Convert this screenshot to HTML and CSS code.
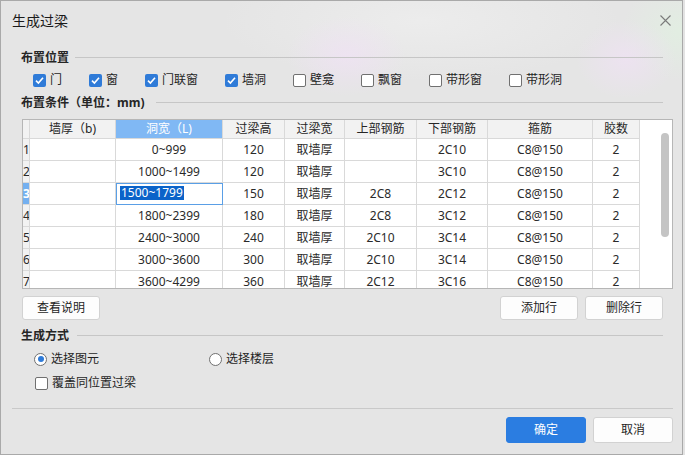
FILE: index.html
```html
<!DOCTYPE html>
<html lang="zh-CN">
<head>
<meta charset="utf-8">
<title>生成过梁</title>
<link rel="stylesheet" href="styles.css">
</head>
<body>
<div class="window">
  <div class="titlebar">
    <span class="title">生成过梁</span>
    <svg class="close" width="11" height="11" viewBox="0 0 11 11"><path d="M0.5 0.5 L10.5 10.5 M10.5 0.5 L0.5 10.5" stroke="#7a7a7a" stroke-width="1.1" fill="none"/></svg>
  </div>
  <div class="content">
    <div class="section-head"><span class="section-label">布置位置</span><i class="rule"></i></div>
    <div class="checks">
      <label class="opt"><span class="cb on"><svg width="13" height="13" viewBox="0 0 13 13"><path d="M3 6.6 L5.4 9 L10 3.8" stroke="#fff" stroke-width="1.6" fill="none"/></svg></span>门</label>
      <label class="opt"><span class="cb on"><svg width="13" height="13" viewBox="0 0 13 13"><path d="M3 6.6 L5.4 9 L10 3.8" stroke="#fff" stroke-width="1.6" fill="none"/></svg></span>窗</label>
      <label class="opt"><span class="cb on"><svg width="13" height="13" viewBox="0 0 13 13"><path d="M3 6.6 L5.4 9 L10 3.8" stroke="#fff" stroke-width="1.6" fill="none"/></svg></span>门联窗</label>
      <label class="opt"><span class="cb on"><svg width="13" height="13" viewBox="0 0 13 13"><path d="M3 6.6 L5.4 9 L10 3.8" stroke="#fff" stroke-width="1.6" fill="none"/></svg></span>墙洞</label>
      <label class="opt"><span class="cb"></span>壁龛</label>
      <label class="opt"><span class="cb"></span>飘窗</label>
      <label class="opt"><span class="cb"></span>带形窗</label>
      <label class="opt"><span class="cb"></span>带形洞</label>
    </div>
    <div class="section-head sh2"><span class="section-label">布置条件（单位：mm)</span><i class="rule"></i></div>
    <div class="grid-wrap">
      <div class="grid">
        <div class="c hd rh"></div><div class="c hd">墙厚（b)</div><div class="c hd sel-col">洞宽（L)</div><div class="c hd">过梁高</div><div class="c hd">过梁宽</div><div class="c hd">上部钢筋</div><div class="c hd">下部钢筋</div><div class="c hd">箍筋</div><div class="c hd">胶数</div>

        <div class="c rh">1</div><div class="c"></div><div class="c">0~999</div><div class="c">120</div><div class="c">取墙厚</div><div class="c"></div><div class="c">2C10</div><div class="c">C8@150</div><div class="c">2</div>
        <div class="c rh">2</div><div class="c"></div><div class="c">1000~1499</div><div class="c">120</div><div class="c">取墙厚</div><div class="c"></div><div class="c">3C10</div><div class="c">C8@150</div><div class="c">2</div>
        <div class="c rh rh-sel">3</div><div class="c"></div><div class="c editor"><span class="sel-text">1500~1799</span></div><div class="c">150</div><div class="c">取墙厚</div><div class="c">2C8</div><div class="c">2C12</div><div class="c">C8@150</div><div class="c">2</div>
        <div class="c rh">4</div><div class="c"></div><div class="c">1800~2399</div><div class="c">180</div><div class="c">取墙厚</div><div class="c">2C8</div><div class="c">3C12</div><div class="c">C8@150</div><div class="c">2</div>
        <div class="c rh">5</div><div class="c"></div><div class="c">2400~3000</div><div class="c">240</div><div class="c">取墙厚</div><div class="c">2C10</div><div class="c">3C14</div><div class="c">C8@150</div><div class="c">2</div>
        <div class="c rh">6</div><div class="c"></div><div class="c">3000~3600</div><div class="c">300</div><div class="c">取墙厚</div><div class="c">2C10</div><div class="c">3C14</div><div class="c">C8@150</div><div class="c">2</div>
        <div class="c rh">7</div><div class="c"></div><div class="c">3600~4299</div><div class="c">360</div><div class="c">取墙厚</div><div class="c">2C12</div><div class="c">3C16</div><div class="c">C8@150</div><div class="c">2</div>
      </div>
      <div class="vscroll"><div class="thumb"></div></div>
    </div>
    <div class="btn-row">
      <button class="btn">查看说明</button>
      <div class="spacer"></div>
      <button class="btn">添加行</button>
      <button class="btn">删除行</button>
    </div>
    <div class="section-head sh3"><span class="section-label">生成方式</span><i class="rule"></i></div>
    <div class="radios">
      <label class="opt"><span class="rd on"><i></i></span>选择图元</label>
      <label class="opt"><span class="rd"></span>选择楼层</label>
    </div>
    <div class="check-line">
      <label class="opt"><span class="cb"></span>覆盖同位置过梁</label>
    </div>
  </div>
  <div class="footer">
    <button class="fbtn primary">确定</button>
    <button class="fbtn">取消</button>
  </div>
</div>
</body>
</html>
```

FILE: styles.css
```css
* { box-sizing: border-box; }
html, body { margin: 0; padding: 0; }
body {
  width: 685px;
  height: 455px;
  background: #e3e3e3;
  font-family: "Noto Sans", "Noto Sans CJK SC", sans-serif;
  font-size: 12px;
  color: #1f1f1f;
  overflow: hidden;
}
.window {
  width: 683px;
  height: 455px;
  border: 1px solid #a9a9a9;
  background:
    radial-gradient(ellipse 60px 40px at 345px 55px, rgba(240, 225, 245, 0.7), transparent),
    radial-gradient(ellipse 50px 40px at 625px 58px, rgba(240, 225, 245, 0.7), transparent),
    radial-gradient(ellipse 60px 50px at 680px 30px, rgba(225, 240, 225, 0.8), transparent),
    radial-gradient(ellipse 200px 60px at 420px 20px, rgba(238, 238, 238, 0.8), transparent),
    #e5e5e5;
  display: flex;
  flex-direction: column;
}
.titlebar {
  height: 39px;
  display: flex;
  align-items: center;
  justify-content: space-between;
  padding: 0 11px 0 11px;
}
.title {
  font-size: 14px;
  line-height: 20px;
  color: #1a1a1a;
  margin-top: 1px;
}
.close { margin-top: -1px; }

.content {
  display: flex;
  flex-direction: column;
  padding: 0 9px 0 20px;
}
.section-head {
  display: flex;
  align-items: center;
  height: 16px;
  margin-top: 10px;
  margin-right: 10px;
}
.section-label {
  font-weight: 700;
  line-height: 16px;
  color: #262626;
  white-space: nowrap;
}
.rule {
  flex: 1;
  height: 1px;
  background: #c6c6c6;
  margin-left: 6px;
  margin-top: -1px;
}
.sh2 { margin-top: 7px; }
.sh2 .rule { margin-left: 12px; }
.sh3 { margin-top: 8px; }
.sh3 .rule { margin-left: 8px; }

.checks {
  display: flex;
  gap: 27px;
  margin-top: 6px;
  padding-left: 12px;
  height: 16px;
  align-items: center;
}
.opt {
  display: flex;
  align-items: center;
  gap: 4px;
  line-height: 16px;
  white-space: nowrap;
}
.cb {
  width: 13px;
  height: 13px;
  border: 1px solid #707070;
  border-radius: 2px;
  background: #fff;
  display: block;
  flex: none;
}
.cb.on {
  border: none;
  background: #2f7bd8;
}
.cb svg { display: block; }
.rd {
  width: 13px;
  height: 13px;
  border: 1px solid #707070;
  border-radius: 50%;
  background: #fff;
  display: flex;
  align-items: center;
  justify-content: center;
  flex: none;
}
.rd.on i {
  display: block;
  width: 6px;
  height: 6px;
  border-radius: 50%;
  background: #2f7bd8;
}

.grid-wrap {
  margin-top: 8px;
  margin-left: 1px;
  height: 170px;
  border: 1px solid #b6b6b6;
  background: #fff;
  display: flex;
  overflow: hidden;
}
.grid {
  display: grid;
  grid-template-columns: 7px 86px 107px 62px 60px 72px 71px 105px 47px;
  grid-auto-rows: 22px;
  grid-template-rows: 19px;
  flex: none;
}
.c {
  border-right: 1px solid #d9d9d9;
  border-bottom: 1px solid #d9d9d9;
  text-align: center;
  line-height: 21px;
  color: #2a2a2a;
  white-space: nowrap;
  overflow: hidden;
}
.hd {
  background: #f2f2f2;
  line-height: 18px;
  color: #262626;
}
.sel-col {
  background: #80b8f4;
  color: #fff;
}
.rh {
  background: #f2f2f2;
  text-align: left;
  padding-left: 0;
  font-size: 12px;
}
.rh-sel {
  background: #74b0f0;
  color: #fff;
  font-weight: 700;
}
.editor {
  border: 1px solid #5a9fe6;
  text-align: left;
  padding: 2px 0 0 3px;
  line-height: 14px;
}
.sel-text {
  display: inline-block;
  background: #0b63c9;
  color: #fff;
  line-height: 14px;
  height: 14px;
  padding: 0 1px;
}
.vscroll {
  flex: 1;
  display: flex;
  justify-content: flex-end;
  padding: 13px 3px 0 0;
}
.thumb {
  width: 8px;
  height: 104px;
  border-radius: 4px;
  background: #c4c4c4;
}

.btn-row {
  display: flex;
  gap: 7px;
  margin-top: 7px;
  margin-right: 10px;
  margin-left: 1px;
}
.spacer { flex: 1; }
.btn, .fbtn {
  font-family: "Noto Sans", "Noto Sans CJK SC", sans-serif;
  font-size: 12px;
  color: #1f1f1f;
  background: #fdfdfd;
  border: 1px solid #d2d2d2;
  border-radius: 3px;
  padding: 0;
  height: 24px;
  width: 78px;
  line-height: 22px;
}

.radios {
  display: flex;
  gap: 110px;
  margin-top: 7px;
  padding-left: 13px;
  height: 16px;
  align-items: center;
}
.check-line {
  display: flex;
  margin-top: 8px;
  padding-left: 14px;
  height: 16px;
  align-items: center;
}

.footer {
  margin: auto 9px 0 11px;
  border-top: 1px solid #c9c9c9;
  display: flex;
  justify-content: flex-end;
  gap: 7px;
  padding-top: 8px;
  height: 46px;
}
.fbtn {
  width: 80px;
  height: 26px;
  line-height: 24px;
  border-radius: 3px;
}
.fbtn.primary {
  background: #2b7de1;
  border-color: #2b7de1;
  color: #fff;
}
```
